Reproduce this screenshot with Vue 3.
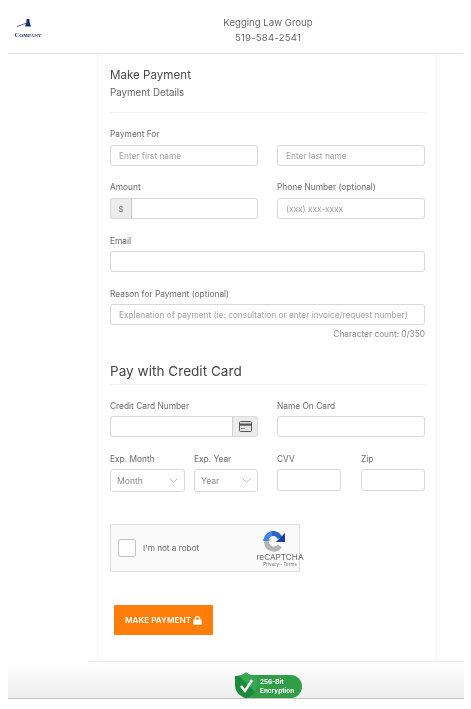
<script setup>
// Selects and the small inputs of the last card row
const expFields = [
  { label: "Exp. Month", placeholder: "Month" },
  { label: "Exp. Year", placeholder: "Year" }
]
const smallFields = ["CVV", "Zip"]
</script>

<template>
<div class="page">
  <header class="top">
    <div class="logo">
      <svg width="30" height="13" viewBox="0 0 30 13">
        <path d="M4 8.5 L14 5" stroke="#3a4896" stroke-width="0.8" fill="none" />
        <path d="M13.5 1 h3 v3 l1.5 4.5 h-6 l1.5 -4.5 z" fill="#1d2a70" />
      </svg>
      <span class="logo-word">Company</span>
    </div>
    <div class="firm">
      <div>Kegging Law Group</div>
      <div class="phone">519-584-2541</div>
    </div>
  </header>

  <main class="card">
    <h1 class="title">Make Payment</h1>
    <p class="subtitle">Payment Details</p>
    <hr class="rule rule-first" />

    <div class="two">
      <div class="field">
        <label>Payment For</label>
        <input class="box" placeholder="Enter first name" />
      </div>
      <div class="field">
        <label>&nbsp;</label>
        <input class="box" placeholder="Enter last name" />
      </div>
      <div class="field">
        <label>Amount</label>
        <div class="group">
          <span class="addon addon-left">$</span>
          <input class="box box-joined-left" />
        </div>
      </div>
      <div class="field">
        <label>Phone Number (optional)</label>
        <input class="box" placeholder="(xxx) xxx-xxxx" />
      </div>
    </div>

    <div class="field single">
      <label>Email</label>
      <input class="box" />
    </div>

    <div class="field single">
      <label>Reason for Payment (optional)</label>
      <input class="box" placeholder="Explanation of payment (ie: consultation or enter invoice/request number)" />
    </div>
    <div class="count">Character count: 0/350</div>

    <h2 class="pay-title">Pay with Credit Card</h2>
    <hr class="rule" />

    <div class="two card-row">
      <div class="field">
        <label>Credit Card Number</label>
        <div class="group">
          <input class="box box-joined-right" />
          <span class="addon addon-right">
            <svg width="13" height="11" viewBox="0 0 13 11">
              <rect x="0.5" y="0.5" width="12" height="10" rx="1" fill="#e4e4e4" stroke="#555" />
              <rect x="1" y="2.5" width="11" height="2.2" fill="#555" />
              <rect x="2" y="7" width="4" height="1" fill="#888" />
            </svg>
          </span>
        </div>
      </div>
      <div class="field">
        <label>Name On Card</label>
        <input class="box" />
      </div>

      <div class="exp-pair">
        <div v-for="f in expFields" :key="f.label" class="field">
          <label>{{ f.label }}</label>
          <div class="select">
            <span>{{ f.placeholder }}</span>
            <svg width="9" height="5" viewBox="0 0 9 5">
              <path d="M0.5 0.5 L4.5 4.2 L8.5 0.5" fill="none" stroke="#aaa" stroke-width="0.8" />
            </svg>
          </div>
        </div>
      </div>
      <div class="small-pair">
        <div v-for="name in smallFields" :key="name" class="field">
          <label>{{ name }}</label>
          <input class="box" />
        </div>
      </div>
    </div>

    <div class="captcha">
      <span class="check"></span>
      <span class="robot">I'm not a robot</span>
      <div class="recap">
        <svg class="recap-icon" width="23" height="21" viewBox="0 0 23 21">
          <path d="M4.5 11 A7.5 7.5 0 0 0 18 15" fill="none" stroke="#b4b4b4" stroke-width="5" />
          <path d="M0 8 L9 8 L4.5 13 Z" fill="#b4b4b4" />
          <path d="M4 10 A7.5 7.5 0 0 1 12 2.5" fill="none" stroke="#3f86ea" stroke-width="5" />
          <path d="M10 2.5 A7.5 7.5 0 0 1 18 7" fill="none" stroke="#2a63c9" stroke-width="5" />
          <path d="M14 11 L23 11 L23 2 Z" fill="#173f9e" />
        </svg>
        <span class="recap-name">reCAPTCHA</span>
        <span class="recap-links">Privacy - Terms</span>
      </div>
    </div>

    <button class="pay-btn" type="button">
      MAKE PAYMENT
      <svg width="9" height="9" viewBox="0 0 9 9">
        <path d="M2.3 4 V2.8 a2.2 2.2 0 0 1 4.4 0 V4" fill="none" stroke="#fff" stroke-width="1.1" />
        <rect x="0.3" y="3.6" width="8.4" height="5.2" rx="0.8" fill="#fff" />
      </svg>
    </button>
  </main>

  <footer class="bottom">
    <div class="badge">
      <span class="badge-text">256-Bit<br />Encryption</span>
      <svg class="shield" width="24" height="27" viewBox="0 0 24 27">
        <path d="M12 0.5 C15 3 19 4 23 4 V13 C23 20 18 24 12 26.5 C6 24 1 20 1 13 V4 C5 4 9 3 12 0.5 Z" fill="#1c8a38" />
        <path d="M12 0.5 C15 3 19 4 23 4 V13 C23 16 22 18 21 20 L5 4 C8 3.5 10 2 12 0.5 Z" fill="#35a653" />
        <path d="M7 14 L11 19 L18 8" fill="none" stroke="#fff" stroke-width="2.4" />
      </svg>
    </div>
  </footer>
</div>
</template>

<style>
html, body {
  background: #fff;
}
</style>

<style scoped>
.page {
  width: 471px;
  height: 709px;
  overflow: hidden;
  font-family: Inter, "Liberation Sans", sans-serif;
  color: #666;
  background: #fff;
  filter: blur(0.35px);
}

.top {
  margin: 0 8px;
  height: 53px;
  border-bottom: 1px solid #e2e2e2;
  display: flex;
  align-items: center;
  position: relative;
}

.logo {
  position: absolute;
  left: 5px;
  top: 18px;
  width: 30px;
  display: flex;
  flex-direction: column;
  align-items: center;
}

.logo-word {
  font-family: "Liberation Serif", serif;
  font-variant: small-caps;
  font-size: 6.5px;
  font-weight: 700;
  line-height: 7px;
  color: #26307e;
}

.firm {
  width: 100%;
  text-align: center;
  font-size: 9.6px;
  line-height: 15px;
  color: #666;
  padding-left: 65px;
  padding-top: 6px;
  box-sizing: border-box;
}

.phone {
  letter-spacing: 0.2px;
}

.card {
  width: 340px;
  height: 607px;
  margin-left: 97px;
  box-sizing: border-box;
  padding: 14px 11px 0 12px;
  border-left: 1px solid #f6f6f6;
  border-right: 1px solid #f6f6f6;
}

.title {
  font-size: 11.6px;
  font-weight: 400;
  line-height: 14px;
  margin: 0;
  color: #4a4a4a;
}

.subtitle {
  font-size: 9.75px;
  line-height: 12px;
  margin: 5px 0 0;
  color: #666;
}

.rule {
  border: 0;
  border-top: 1px solid #f0f0f0;
  margin: 0;
}

.rule-first {
  margin-top: 13px;
}

.two {
  display: grid;
  grid-template-columns: 148px 148px;
  column-gap: 19px;
  row-gap: 15px;
  margin-top: 15px;
}

.field {
  display: flex;
  flex-direction: column;
}

.field label {
  font-size: 8.35px;
  line-height: 12px;
  height: 12px;
  margin-bottom: 5px;
  color: #6a6a6a;
}

.single {
  margin-top: 16px;
}

.single label,
.card-row label {
  margin-bottom: 4px;
}

.box {
  height: 21px;
  width: 100%;
  box-sizing: border-box;
  border: 1px solid #d8d8d8;
  border-radius: 3px;
  background: #fff;
  padding: 0 8px;
  font-family: inherit;
  font-size: 8.3px;
  outline: none;
  min-width: 0;
}

.box::placeholder {
  color: #a2a2a2;
  opacity: 1;
}

.group {
  display: flex;
}

.addon {
  flex: none;
  height: 21px;
  box-sizing: border-box;
  background: #ececec;
  border: 1px solid #d8d8d8;
  display: flex;
  align-items: center;
  justify-content: center;
  color: #777;
  font-size: 8px;
}

.addon-left {
  width: 22px;
  border-radius: 3px 0 0 3px;
  border-right: 1px solid #c8c8c8;
}

.addon-right {
  width: 25px;
  border-left: 0;
  border-radius: 0 3px 3px 0;
}

.box-joined-left {
  border-left: 0;
  border-radius: 0 3px 3px 0;
}

.box-joined-right {
  border-right: 1px solid #cfcfcf;
  border-radius: 3px 0 0 3px;
}

.count {
  text-align: right;
  font-size: 8.3px;
  line-height: 12px;
  margin-top: 3px;
  color: #8a8a8a;
}

.pay-title {
  font-size: 13.6px;
  font-weight: 400;
  line-height: 18px;
  margin: 22px 0 0;
  color: #444;
}

.pay-title + .rule {
  margin-top: 4px;
}

.card-row {
  margin-top: 15px;
  row-gap: 16px;
}

.exp-pair {
  display: grid;
  grid-template-columns: 75px 64px;
  column-gap: 9px;
}

.small-pair {
  display: grid;
  grid-template-columns: 64px 64px;
  column-gap: 20px;
}

.small-pair .box {
  height: 22px;
}

.select {
  height: 23px;
  box-sizing: border-box;
  border: 1px solid #d8d8d8;
  border-radius: 3px;
  display: flex;
  align-items: center;
  justify-content: space-between;
  padding: 0 6px 0 6px;
  font-size: 8.6px;
  color: #8a8a8a;
}

.captcha {
  width: 190px;
  height: 48px;
  margin-top: 32px;
  box-sizing: border-box;
  border: 1px solid #dedede;
  background: #fafafa;
  display: flex;
  align-items: center;
  position: relative;
}

.check {
  width: 18px;
  height: 18px;
  margin-left: 7px;
  box-sizing: border-box;
  border: 1px solid #c4c4c4;
  border-radius: 2px;
  background: #fff;
}

.robot {
  margin-left: 7px;
  font-size: 8.2px;
  color: #666;
}

.recap {
  position: absolute;
  left: 146px;
  top: 6px;
  width: 46px;
  display: flex;
  flex-direction: column;
  align-items: center;
}

.recap-icon {
  margin-right: 13px;
}

.recap-name {
  font-size: 8.2px;
  line-height: 9px;
  margin-top: 1px;
  color: #666;
  white-space: nowrap;
}

.recap-links {
  font-size: 4.5px;
  line-height: 6px;
  color: #777;
  white-space: nowrap;
}

.pay-btn {
  margin: 33px 0 0 4px;
  width: 99px;
  height: 30px;
  border: 0;
  border-radius: 1px;
  background: #ff7d0a;
  color: #fff;
  font-family: inherit;
  font-size: 8.2px;
  font-weight: 600;
  display: flex;
  align-items: center;
  justify-content: center;
  gap: 2px;
  padding: 0;
}

.bottom {
  margin: 1px 7px 0 8px;
  height: 36px;
  background: linear-gradient(#ffffff, #ededed);
  border-bottom: 1px solid #c4c4c4;
  position: relative;
}

/* the card's bottom edge runs past its left side */
.bottom::before {
  content: "";
  position: absolute;
  left: 80px;
  right: 0;
  top: -1px;
  height: 1px;
  background: #ececec;
}

/* pill starts behind the shield, shield sticks up over it */
.badge {
  position: absolute;
  left: 240px;
  top: 13px;
  width: 54px;
  height: 23px;
  background: #2f9e46;
  border-radius: 0 12px 12px 0;
}

.badge-text {
  position: absolute;
  left: 12px;
  top: 3px;
  font-size: 6.4px;
  line-height: 8.5px;
  font-weight: 700;
  color: #fff;
  white-space: nowrap;
}

.shield {
  position: absolute;
  left: -14px;
  top: -3px;
}
</style>
